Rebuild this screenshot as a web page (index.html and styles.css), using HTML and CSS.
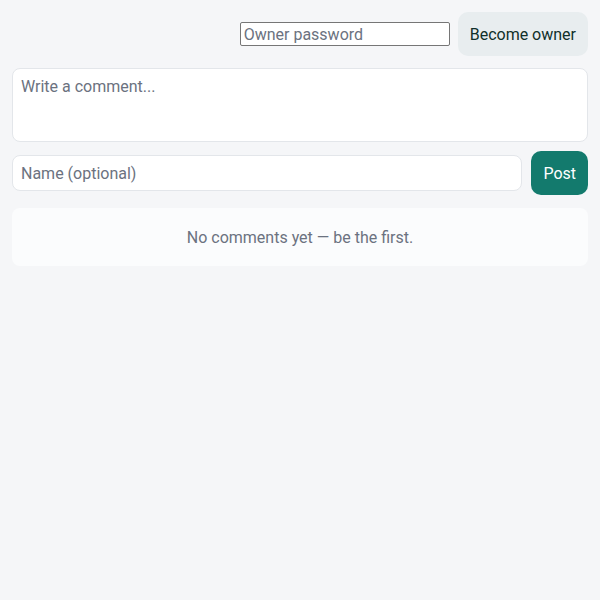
FILE: index.html
```html
<!DOCTYPE html>
<html lang="en">
<head>
  <meta charset="UTF-8">
  <meta name="viewport" content="width=device-width, initial-scale=1.0">
  <title>Comments</title>
  <link rel="stylesheet" href="styles.css">
</head>
<body>
<div class="owner-bar">
  <input type="password" class="owner-input" placeholder="Owner password">
  <button class="owner-btn">Become owner</button>
</div>

<textarea class="comment-text" placeholder="Write a comment..."></textarea>

<div class="post-row">
  <input type="text" class="name-input" placeholder="Name (optional)">
  <button class="post-btn">Post</button>
</div>

<div class="empty">No comments yet — be the first.</div>
</body>
</html>
```

FILE: styles.css
```css
body {
  font-family: Roboto, "Liberation Sans", sans-serif;
  font-size: 16px;
  margin: 0;
  padding: 12px;
  background: #f5f6f8;
  color: #1f2937;
}
input, textarea, button {
  font-family: inherit;
  font-size: 16px;
}
::placeholder {
  color: #6b7280;
  opacity: 1;
}
.owner-bar {
  display: flex;
  justify-content: flex-end;
  align-items: center;
  gap: 8px;
  margin-bottom: 12px;
}
.owner-input {
  box-sizing: border-box;
  width: 210px;
  height: 24px;
  padding: 1px 3px;
  border: 1px solid #767676;
  border-radius: 2px;
  background: #fff;
}
.owner-btn {
  height: 44px;
  padding: 0 12px;
  border: none;
  border-radius: 10px;
  background: #e8edef;
  color: #10302a;
}
.comment-text {
  display: block;
  box-sizing: border-box;
  width: 100%;
  height: 74px;
  padding: 8px;
  border: 1px solid #e3e6ea;
  border-radius: 8px;
  background: #fff;
  resize: none;
  margin-bottom: 9px;
}
.post-row {
  display: flex;
  align-items: center;
  gap: 9px;
  margin-bottom: 13px;
}
.name-input {
  flex: 1;
  box-sizing: border-box;
  height: 36px;
  padding: 0 8px;
  border: 1px solid #e3e6ea;
  border-radius: 8px;
  background: #fff;
}
.post-btn {
  height: 44px;
  padding: 0 12px;
  border: none;
  border-radius: 10px;
  background: #137a6d;
  color: #fff;
}
.empty {
  height: 58px;
  display: flex;
  align-items: center;
  justify-content: center;
  border-radius: 8px;
  background: #fbfcfd;
  color: #6b7280;
}
```
